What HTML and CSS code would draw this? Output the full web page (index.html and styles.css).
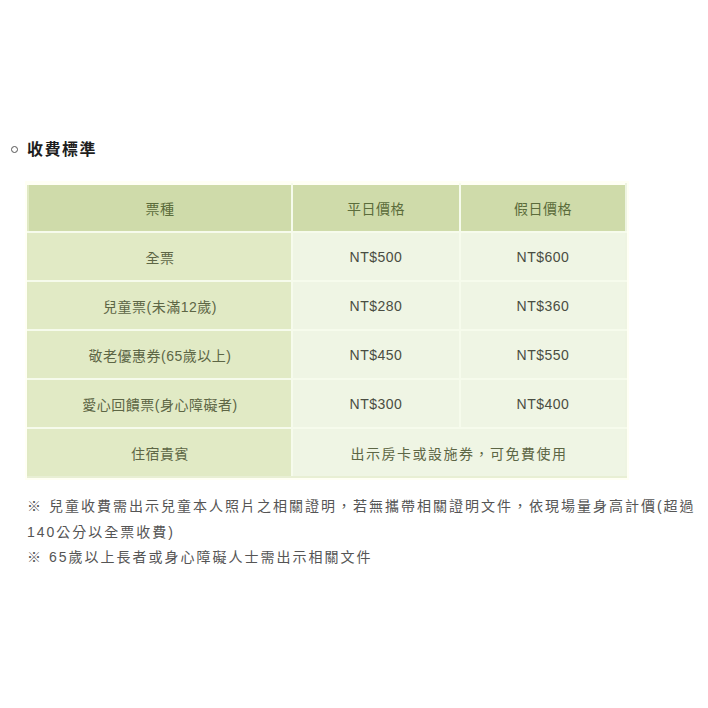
FILE: index.html
```html
<!DOCTYPE html>
<html lang="zh-Hant">
<head>
<meta charset="utf-8">
<link rel="stylesheet" href="styles.css">
</head>
<body>
<div class="page">
  <h2 class="title"><span class="bullet"></span>收費標準</h2>
  <table class="fees">
    <thead>
      <tr><th class="c1">票種</th><th class="c2">平日價格</th><th class="c3">假日價格</th></tr>
    </thead>
    <tbody>
      <tr><td class="k">全票</td><td>NT$500</td><td>NT$600</td></tr>
      <tr><td class="k">兒童票(未滿12歲)</td><td>NT$280</td><td>NT$360</td></tr>
      <tr><td class="k">敬老優惠券(65歲以上)</td><td>NT$450</td><td>NT$550</td></tr>
      <tr><td class="k">愛心回饋票(身心障礙者)</td><td>NT$300</td><td>NT$400</td></tr>
      <tr><td class="k">住宿貴賓</td><td colspan="2" class="note">出示房卡或設施券，可免費使用</td></tr>
    </tbody>
  </table>
  <div class="notes">
    <p>※ 兒童收費需出示兒童本人照片之相關證明，若無攜帶相關證明文件，依現場量身高計價(超過140公分以全票收費)</p>
    <p>※ 65歲以上長者或身心障礙人士需出示相關文件</p>
  </div>
</div>
</body>
</html>
```
FILE: styles.css
```css
html, body {
  margin: 0;
  padding: 0;
  background: #ffffff;
}
body {
  font-family: "Liberation Sans", Arial, "Noto Sans CJK TC", sans-serif;
}
.page {
  padding: 136px 0 0 0;
  width: 708px;
}
.title {
  margin: 0 0 0 11px;
  display: flex;
  align-items: center;
  font-size: 16px;
  font-weight: bold;
  letter-spacing: 1.5px;
  color: #1e1e1e;
  height: 24px;
}
.bullet {
  width: 5px;
  height: 5px;
  border: 1.3px solid #555;
  border-radius: 50%;
  margin-right: 9px;
  margin-top: 2px;
}
.fees {
  margin: 23px 0 0 27px;
  border-collapse: collapse;
  width: 600px;
  background: #fffff6;
  box-shadow: 0 0 0 2px #fffff4;
}
.fees th, .fees td {
  border: 2px solid #f6fbec;
  text-align: center;
  font-size: 14px;
  height: 47px;
  padding: 0;
  letter-spacing: 0.5px;
}
.fees th {
  background: #cfdbaa;
  color: #5b6c3b;
  font-weight: normal;
  height: 46px;
}
.fees tr:first-child th { border-top-color: #fffff5; }
.fees th:first-child, .fees td:first-child { border-left-color: #e0e9c4; }
.fees th.c1 { width: 262px; }
.fees th.c2 { width: 166px; }
.fees td {
  background: #eff5e4;
  color: #4a4d42;
}
.fees td.k {
  background: #e1eac5;
  color: #5d6645;
}
.fees td.note {
  color: #5d6645;
  letter-spacing: 1.5px;
}
.fees tbody tr:last-child td { border-bottom-color: #e8efd4; }
.fees td:last-child, .fees th:last-child { border-right-color: #eef4e2; }
.notes {
  margin: 16px 0 0 27px;
  width: 672px;
  color: #555555;
  font-size: 14px;
  line-height: 25.5px;
  letter-spacing: 2px;
}
.notes p { margin: 0; }
```
